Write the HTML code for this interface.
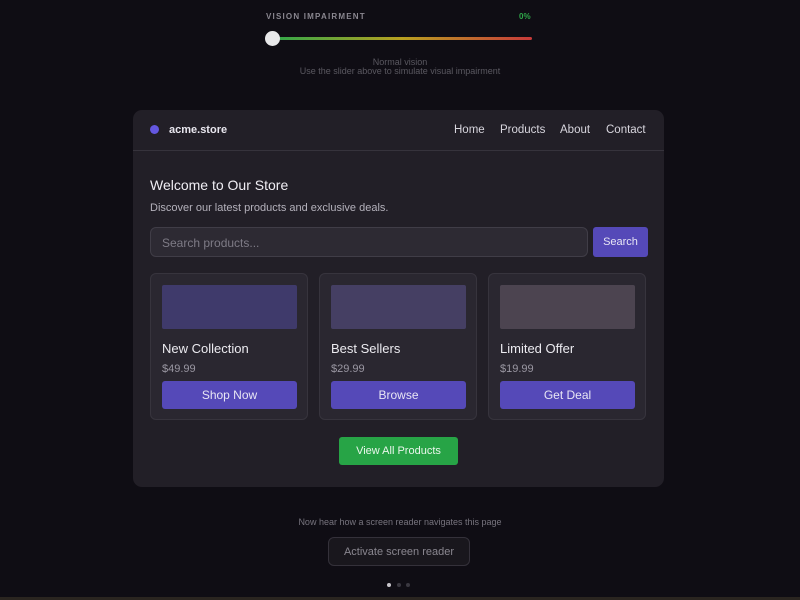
<!DOCTYPE html>
<html><head><style>
*{box-sizing:border-box;margin:0;padding:0}
body{width:800px;height:600px;background:#0f0d14;font-family:"Liberation Sans",sans-serif;position:relative;overflow:hidden;color:#e8e6ee}
.abs{position:absolute}
.lbl{left:266px;top:12px;font-size:8px;letter-spacing:1.2px;color:#8a8790;font-weight:bold}
.pct{left:519px;top:12px;font-size:8px;color:#2fa84a;font-weight:bold}
.track{left:272px;top:37px;width:260px;height:3px;border-radius:2px;background:linear-gradient(90deg,#2fa84a,#b8a020 50%,#c83a3a)}
.knob{left:265px;top:31px;width:15px;height:15px;border-radius:50%;background:#e8e8ea}
.sub{left:0;width:800px;text-align:center;font-size:9px;color:#5a5860}
.card{left:133px;top:110px;width:531px;height:377px;background:#221f27;border-radius:9px}
.hdr{position:absolute;left:0;top:0;width:100%;height:41px;border-bottom:1px solid #36333c}
.dot{left:150px;top:125px;width:9px;height:9px;border-radius:50%;background:#6457e0}
.nav{top:124px;font-size:11.5px;color:#d8d6de}
.inp{left:150px;top:227px;width:438px;height:30px;border:1px solid #403d47;background:#2d2a33;border-radius:6px;font-size:12px;color:#7e7b86;padding:8px 11px}
.btn{background:#5549b8;color:#e8e6f4;font-size:12px;text-align:center;border-radius:3px}
.pc{top:273px;width:158px;height:147px;background:#2a2730;border:1px solid #37343d;border-radius:6px}
.pc .img{position:absolute;left:11px;top:11px;width:135px;height:44px;border-radius:2px}
.pc .t{position:absolute;left:11px;top:67px;font-size:13px;color:#ecebf0}
.pc .p{position:absolute;left:11px;top:89px;font-size:11px;color:#9a97a2}
.pc .b{position:absolute;left:11px;top:107px;width:135px;height:28px;line-height:28px}
</style></head><body>
<div class="abs lbl">VISION IMPAIRMENT</div>
<div class="abs pct">0%</div>
<div class="abs track"></div>
<div class="abs knob"></div>
<div class="abs sub" style="top:57px">Normal vision</div>
<div class="abs sub" style="top:66px">Use the slider above to simulate visual impairment</div>
<div class="abs card"><div class="hdr"></div></div>
<div class="abs dot"></div>
<div class="abs" style="left:169px;top:124px;font-size:11px;font-weight:bold;color:#e8e6ee">acme.store</div>
<div class="abs nav" style="left:454px">Home</div>
<div class="abs nav" style="left:500px">Products</div>
<div class="abs nav" style="left:560px">About</div>
<div class="abs nav" style="left:606px">Contact</div>
<div class="abs" style="left:150px;top:177px;font-size:14px;color:#f0eef4">Welcome to Our Store</div>
<div class="abs" style="left:150px;top:202px;font-size:11px;color:#b4b1bb">Discover our latest products and exclusive deals.</div>
<div class="abs inp">Search products...</div>
<div class="abs btn" style="left:593px;top:227px;width:55px;height:30px;line-height:30px;font-size:11px">Search</div>
<div class="abs pc" style="left:150px"><div class="img" style="background:#3f3a6b"></div><div class="t">New Collection</div><div class="p">$49.99</div><div class="btn b">Shop Now</div></div>
<div class="abs pc" style="left:319px"><div class="img" style="background:#453f63"></div><div class="t">Best Sellers</div><div class="p">$29.99</div><div class="btn b">Browse</div></div>
<div class="abs pc" style="left:488px"><div class="img" style="background:#4c4450"></div><div class="t">Limited Offer</div><div class="p">$19.99</div><div class="btn b">Get Deal</div></div>
<div class="abs" style="left:339px;top:437px;width:119px;height:28px;line-height:28px;background:#27a446;border-radius:3px;color:#eaf6ec;font-size:11px;text-align:center">View All Products</div>
<div class="abs sub" style="top:517px;color:#77747e">Now hear how a screen reader navigates this page</div>
<div class="abs" style="left:328px;top:537px;width:142px;height:29px;line-height:29px;border:1px solid #34313a;background:#19171d;border-radius:6px;color:#8a8790;font-size:11px;text-align:center">Activate screen reader</div>
<div class="abs" style="left:387px;top:583px;width:4px;height:4px;border-radius:50%;background:#c8c6cc"></div>
<div class="abs" style="left:397px;top:583px;width:4px;height:4px;border-radius:50%;background:#3a3840"></div>
<div class="abs" style="left:406px;top:583px;width:4px;height:4px;border-radius:50%;background:#3a3840"></div>
<div class="abs" style="left:0;top:597px;width:800px;height:3px;background:#2a2520"></div>
</body></html>
